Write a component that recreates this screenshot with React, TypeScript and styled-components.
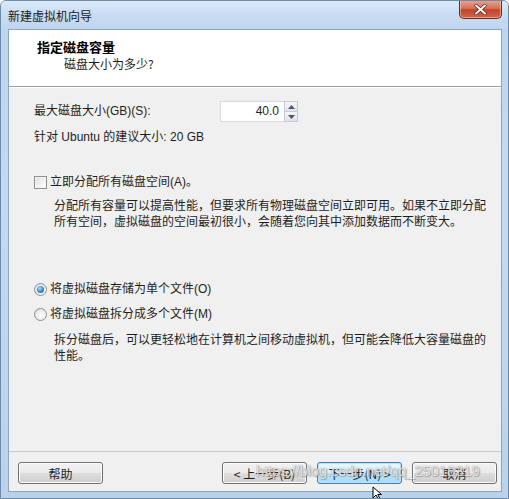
import React from "react";
import styled, { createGlobalStyle } from "styled-components";

const Global = createGlobalStyle`
  html, body { margin: 0; padding: 0; background: #fff; }
  body { font-family: "Liberation Sans", "Noto Sans CJK SC", sans-serif; font-size: 12px; color: #1e1e1e; }
  * { box-sizing: border-box; }
`;

const Window = styled.div`
  position: relative;
  width: 509px;
  height: 499px;
  display: flex;
  flex-direction: column;
  background: linear-gradient(180deg, #cfe2f5 0%, #bcd6f0 6%, #c4daf0 40%, #b9d2ec 100%);
  border: 1px solid #6f8aa8;
  border-radius: 6px 6px 0 0;
  overflow: hidden;
`;

const TitleBar = styled.div`
  height: 28px;
  flex: none;
  display: flex;
  align-items: flex-start;
  justify-content: space-between;
  padding-left: 7px;
  padding-right: 6px;
  background: linear-gradient(180deg, #dceaf8 0%, #c9ddf3 45%, #bfd6ef 100%);
`;

const Title = styled.div`
  margin-top: 7px;
  font-size: 12px;
  line-height: 15px;
  color: #1a1a1a;
  font-family: "Noto Sans CJK SC", sans-serif;
`;

const CloseBtn = styled.div`
  width: 43px;
  height: 19px;
  margin-top: -1px;
  border: 1px solid #6b2a1e;
  border-top: none;
  border-radius: 0 0 5px 5px;
  background: linear-gradient(180deg, #e8a590 0%, #d8735a 45%, #c2432a 55%, #d1664a 100%);
  display: flex;
  align-items: center;
  justify-content: center;
  box-shadow: inset 0 0 0 1px rgba(255, 220, 200, 0.5);
`;

const Client = styled.div`
  flex: 1;
  margin: 0 6px 6px 7px;
  display: flex;
  flex-direction: column;
  background: #f0f0f0;
  border: 1px solid #8ea4bd;
`;

const Header = styled.div`
  height: 57px;
  flex: none;
  background: #ffffff;
  padding: 8px 0 0 28px;
  border-bottom: 1px solid #a0a0a0;
  box-shadow: 0 1px 0 #ffffff;
`;

const HeaderTitle = styled.div`
  font-family: "Noto Sans CJK SC", sans-serif;
  font-weight: 700;
  font-size: 13px;
  line-height: 17px;
  color: #000;
`;

const HeaderSub = styled.div`
  font-family: "Noto Sans CJK SC", sans-serif;
  font-size: 12px;
  line-height: 17px;
  padding-left: 27px;
  color: #1e1e1e;
`;

const Content = styled.div`
  flex: 1;
  padding: 14px 0 0 25px;
  display: flex;
  flex-direction: column;
`;

const Row = styled.div<{ $mt?: number }>`
  display: flex;
  align-items: center;
  margin-top: ${(p) => p.$mt ?? 0}px;
  line-height: 15px;
`;

const Label = styled.span<{ $w?: number }>`
  width: ${(p) => (p.$w ? `${p.$w}px` : "auto")};
  white-space: nowrap;
`;

const Spin = styled.div`
  display: flex;
  height: 21px;
`;

const SpinInput = styled.div`
  width: 64px;
  height: 21px;
  background: #fff;
  border: 1px solid #d5dbe2;
  border-right: none;
  text-align: right;
  padding-right: 5px;
  line-height: 19px;
  font-size: 12px;
`;

const SpinButtons = styled.div`
  width: 14px;
  display: flex;
  flex-direction: column;
  border: 1px solid #c8ccd2;
`;

const SpinBtn = styled.div`
  flex: 1;
  display: flex;
  align-items: center;
  justify-content: center;
  background: linear-gradient(180deg, #f6f6f6, #dde3ea);
  & + & { border-top: 1px solid #c8ccd2; }
`;

const Para = styled.div<{ $mt?: number }>`
  margin-top: ${(p) => p.$mt ?? 0}px;
  padding-left: 20px;
  padding-right: 12px;
  line-height: 15.5px;
  font-family: "Noto Sans CJK SC", sans-serif;
`;

const Check = styled.span`
  width: 13px;
  height: 13px;
  margin-right: 3px;
  border: 1px solid #8e8f8f;
  background: linear-gradient(135deg, #dcdcdc 0%, #f4f4f4 60%, #ffffff 100%);
  box-shadow: inset 0 0 0 1px #f4f4f4;
`;

const Radio = styled.span<{ $on?: boolean }>`
  width: 13px;
  height: 13px;
  margin-right: 3px;
  border-radius: 50%;
  border: 1px solid #8e8f8f;
  background: radial-gradient(circle at 60% 60%, #ffffff 0%, #e8e8e8 60%, #d2d2d2 100%);
  display: flex;
  align-items: center;
  justify-content: center;
  &::after {
    content: "";
    display: ${(p) => (p.$on ? "block" : "none")};
    width: 7px;
    height: 7px;
    border-radius: 50%;
    background: radial-gradient(circle at 40% 35%, #a8dcff 0%, #2d8ad2 55%, #1a5a98 100%);
  }
`;

const Footer = styled.div`
  flex: none;
  height: 40px;
  border-top: 1px solid #c8c8c8;
  display: flex;
  align-items: flex-start;
  padding: 10px 4px 0 9px;
  gap: 10px;
`;

const Button = styled.div<{ $primary?: boolean }>`
  width: 85px;
  height: 22px;
  border-radius: 3px;
  display: flex;
  align-items: center;
  justify-content: center;
  font-family: "Noto Sans CJK SC", sans-serif;
  font-size: 12px;
  color: #1e1e1e;
  border: 1px solid ${(p) => (p.$primary ? "#3c7fb1" : "#707070")};
  background: ${(p) =>
    p.$primary
      ? "linear-gradient(180deg, #eaf6fd 0%, #d9f0fc 50%, #bee6fd 52%, #a7d9f5 100%)"
      : "linear-gradient(180deg, #f2f2f2 0%, #ebebeb 50%, #dddddd 52%, #cfcfcf 100%)"};
  box-shadow: inset 0 0 0 1px ${(p) => (p.$primary ? "#bfe3f7" : "#fcfcfc")};
`;

const Spacer = styled.div`
  flex: 1;
`;

const Watermark = styled.div`
  position: absolute;
  left: 255px;
  top: 461px;
  font-family: "Liberation Sans", sans-serif;
  font-size: 15px;
  letter-spacing: -0.2px;
  color: rgba(255, 255, 255, 0.75);
  text-shadow: 0 0 1px rgba(90, 90, 90, 0.7), 1px 1px 1px rgba(120, 120, 120, 0.5);
  pointer-events: none;
`;

const Cursor = styled.svg`
  position: absolute;
  left: 371px;
  top: 485px;
`;

export default function App() {
  return (
    <>
      <Global />
      <Window>
        <TitleBar>
          <Title>新建虚拟机向导</Title>
          <CloseBtn>
            <svg width="13" height="11" viewBox="0 0 13 11">
              <path d="M2 1.5 L11 9.5 M11 1.5 L2 9.5" stroke="#5a1a10" strokeWidth="3.2" strokeLinecap="round" />
              <path d="M2 1.5 L11 9.5 M11 1.5 L2 9.5" stroke="#ffffff" strokeWidth="2" strokeLinecap="round" />
            </svg>
          </CloseBtn>
        </TitleBar>
        <Client>
          <Header>
            <HeaderTitle>指定磁盘容量</HeaderTitle>
            <HeaderSub>磁盘大小为多少?</HeaderSub>
          </Header>
          <Content>
            <Row>
              <Label $w={186}>最大磁盘大小(GB)(S):</Label>
              <Spin>
                <SpinInput>40.0</SpinInput>
                <SpinButtons>
                  <SpinBtn>
                    <svg width="7" height="4" viewBox="0 0 7 4"><path d="M0 4 L3.5 0 L7 4Z" fill="#4a5866" /></svg>
                  </SpinBtn>
                  <SpinBtn>
                    <svg width="7" height="4" viewBox="0 0 7 4"><path d="M0 0 L3.5 4 L7 0Z" fill="#4a5866" /></svg>
                  </SpinBtn>
                </SpinButtons>
              </Spin>
            </Row>
            <Row $mt={8}>
              <Label>针对 Ubuntu 的建议大小: 20 GB</Label>
            </Row>
            <Row $mt={30}>
              <Check />
              <Label>立即分配所有磁盘空间(A)。</Label>
            </Row>
            <Para $mt={7}>
              分配所有容量可以提高性能，但要求所有物理磁盘空间立即可用。如果不立即分配所有空间，虚拟磁盘的空间最初很小，会随着您向其中添加数据而不断变大。
            </Para>
            <Row $mt={54}>
              <Radio $on />
              <Label>将虚拟磁盘存储为单个文件(O)</Label>
            </Row>
            <Row $mt={10}>
              <Radio />
              <Label>将虚拟磁盘拆分成多个文件(M)</Label>
            </Row>
            <Para $mt={9}>
              拆分磁盘后，可以更轻松地在计算机之间移动虚拟机，但可能会降低大容量磁盘的性能。
            </Para>
          </Content>
          <Footer>
            <Button>帮助</Button>
            <Spacer />
            <Button>&lt; 上一步(B)</Button>
            <Button $primary>下一步(N) &gt;</Button>
            <Button>取消</Button>
          </Footer>
        </Client>
        <Watermark>https://blog.csdn.net/qq_25018319</Watermark>
        <Cursor width="12" height="14" viewBox="0 0 12 14">
          <path d="M1 1 L1 12 L4 9 L6.5 13.5 L8 12.8 L5.8 8.5 L9.5 8.5 Z" fill="#fff" stroke="#000" strokeWidth="1" />
        </Cursor>
      </Window>
    </>
  );
}
